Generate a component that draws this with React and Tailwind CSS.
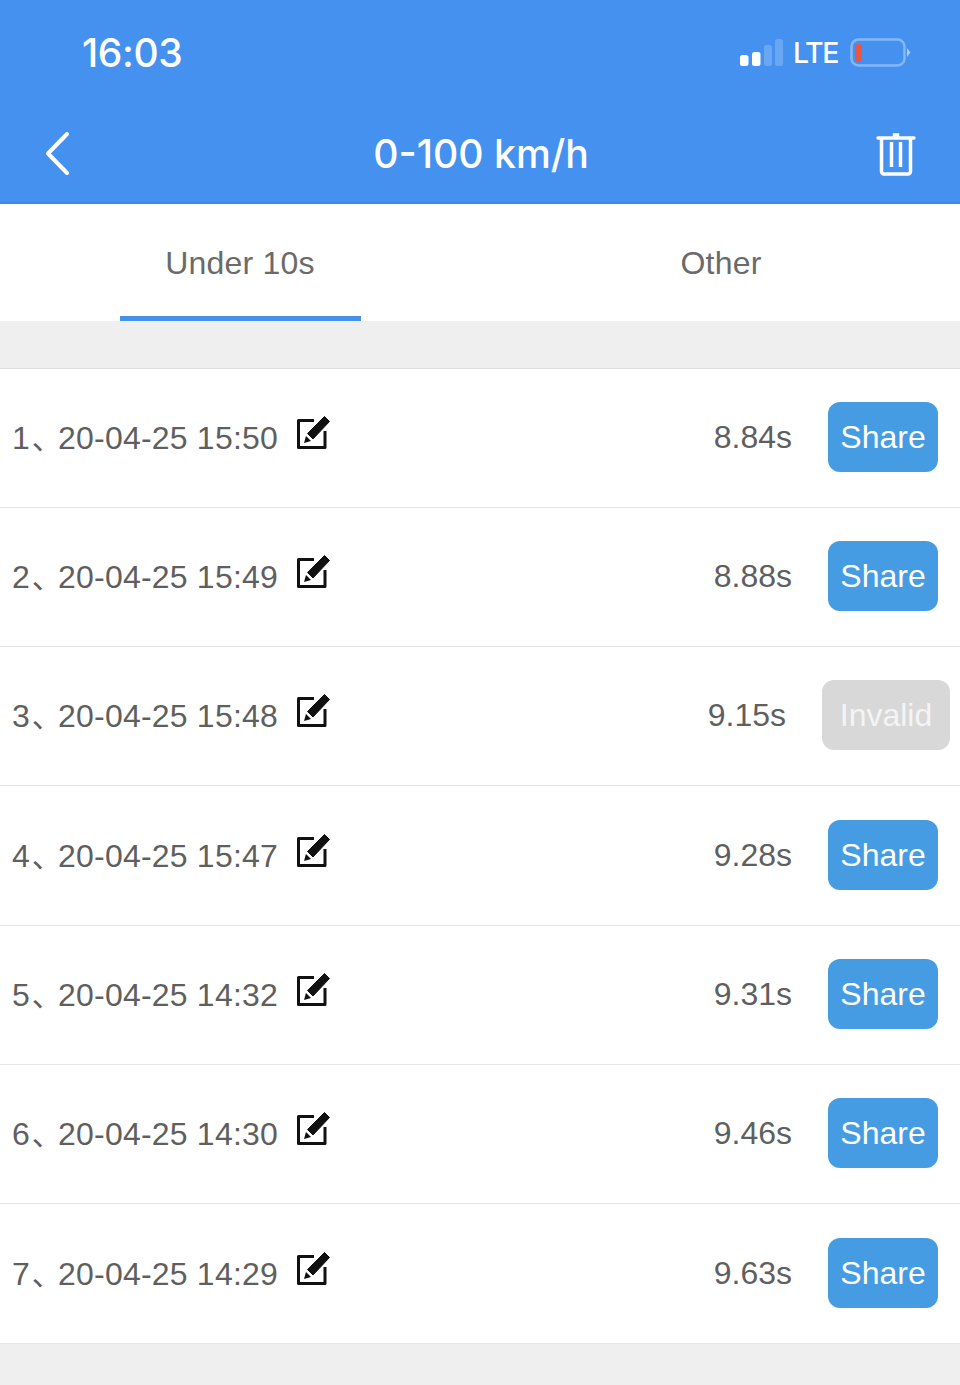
const rows = [
  ["1", "20-04-25 15:50", "8.84s", true],
  ["2", "20-04-25 15:49", "8.88s", true],
  ["3", "20-04-25 15:48", "9.15s", false],
  ["4", "20-04-25 15:47", "9.28s", true],
  ["5", "20-04-25 14:32", "9.31s", true],
  ["6", "20-04-25 14:30", "9.46s", true],
  ["7", "20-04-25 14:29", "9.63s", true],
];

function EditIcon() {
  return (
    <svg width="36" height="36" viewBox="0 0 36 36" className="shrink-0">
      <path d="M19 5.5H3.5V32.5H30V16" fill="none" stroke="#111" strokeWidth="3" strokeLinejoin="round" />
      <path d="M29.5 1.5L34.5 6.5L18 24L12.5 18.5Z" fill="#111" strokeLinejoin="round" stroke="#111" strokeWidth="1" />
      <path d="M11 21L16 26L9 28Z" fill="#111" />
    </svg>
  );
}

function Row({ n, date, time, ok }) {
  return (
    <div className="flex h-[139.33px] items-center border-b-[1.5px] border-[#e4e4e4] bg-white pb-[2px]">
      <div className="flex w-[333px] shrink-0 items-center pl-[12px]">
        <span className="w-[46px] shrink-0 translate-y-[1px] font-['Liberation_Sans','Noto_Sans_CJK_SC',sans-serif] text-[32px] leading-none whitespace-nowrap text-[#5f5f5f]">
          {n}<span className="ml-[2px] text-[30px] tracking-[-4px]">、</span>
        </span>
        <span className="w-[222px] shrink-0 translate-y-[1px] font-['Liberation_Sans',sans-serif] text-[32px] leading-none tracking-[0.21px] whitespace-nowrap text-[#5f5f5f]">
          {date}
        </span>
        <span className="ml-[15px] -translate-y-[4px]"><EditIcon /></span>
      </div>
      <div className="flex flex-1 items-center justify-end font-['Liberation_Sans',sans-serif] text-[32px] leading-none">
        <span className="mr-[36px] text-[#5f5f5f]">{time}</span>
        {ok ? (
          <span className="mr-[22px] flex h-[70px] w-[110px] items-center justify-center rounded-[12px] bg-[#469ce2] text-white">Share</span>
        ) : (
          <span className="mr-[10px] flex h-[70px] w-[128px] items-center justify-center rounded-[12px] bg-[#d8d8d8] text-[#f4f4f4]">Invalid</span>
        )}
      </div>
    </div>
  );
}

export default function App() {
  return (
    <div className="flex h-[1385px] w-[960px] flex-col overflow-hidden bg-[#efefef]">
      <header className="h-[204px] shrink-0 border-b-2 border-[#3f88e6] bg-[#4591f0] text-white">
        <div className="flex h-[104px] items-center pt-[2px]">
          <span className="ml-[82px] font-['Inter',sans-serif] text-[39px] font-medium tracking-[-0.4px]">16:03</span>
          <div className="ml-auto mr-[48px] flex items-center">
            <svg width="44" height="28" viewBox="0 0 44 28" className="mr-[10px]">
              <rect x="1" y="16" width="8.5" height="11" rx="2.5" fill="#fff" />
              <rect x="13" y="13" width="8.5" height="14" rx="2.5" fill="#fff" />
              <rect x="25" y="6" width="8" height="21" rx="2.5" fill="#fff" fillOpacity=".2" />
              <rect x="36" y="0" width="8" height="27" rx="2.5" fill="#fff" fillOpacity=".2" />
            </svg>
            <span className="mr-[12px] font-['Inter',sans-serif] text-[28.5px] leading-none font-medium tracking-[-1.4px]">LTE</span>
            <svg width="62" height="30" viewBox="0 0 62 30">
              <rect x="1.5" y="1.5" width="53" height="26" rx="7" fill="none" stroke="#fff" strokeOpacity=".35" strokeWidth="2.5" />
              <rect x="5" y="6" width="7" height="18" rx="3" fill="#ea5644" />
              <path d="M57 10L60.5 14.5L57 19Z" fill="#fff" fillOpacity=".55" />
            </svg>
          </div>
        </div>
        <div className="flex h-[98px] items-center justify-between pt-[2px]">
          <svg width="30" height="46" viewBox="0 0 30 46" className="ml-[44px]">
            <path d="M23 3L4 22.5L23 42" fill="none" stroke="#fff" strokeWidth="4" strokeLinecap="round" strokeLinejoin="round" />
          </svg>
          <h1 className="translate-x-[6px] font-['Inter',sans-serif] text-[39.2px] leading-none font-medium">0-100 km/h</h1>
          <svg width="40" height="44" viewBox="0 0 40 44" className="mr-[44px]">
            <path d="M2 6H38" stroke="#fff" strokeWidth="3.5" strokeLinecap="round" />
            <path d="M18 4.5V2.5H22V4.5" fill="#fff" stroke="#fff" strokeWidth="2.5" />
            <path d="M5.5 6V39.5A2.5 2.5 0 0 0 8 42H32A2.5 2.5 0 0 0 34.5 39.5V6" fill="none" stroke="#fff" strokeWidth="3.5" />
            <path d="M15.5 10V35M24.5 10V35" stroke="#fff" strokeWidth="3.5" />
          </svg>
        </div>
      </header>
      <nav className="flex h-[117px] shrink-0 bg-white font-['Liberation_Sans',sans-serif] text-[32px] tracking-[0.2px] text-[#6a6a6a]">
        <div className="flex w-1/2 justify-center">
          <div className="flex h-full w-[241px] items-center justify-center border-b-[5px] border-[#4591e8] pt-[6px]">Under 10s</div>
        </div>
        <div className="flex w-1/2 items-center justify-center pl-[2px]">Other</div>
      </nav>
      <div className="h-[47.5px] shrink-0 border-b-[1.5px] border-[#dedede]" />
      {rows.map(([n, date, time, ok]) => (
        <Row key={n} n={n} date={date} time={time} ok={ok} />
      ))}
    </div>
  );
}
